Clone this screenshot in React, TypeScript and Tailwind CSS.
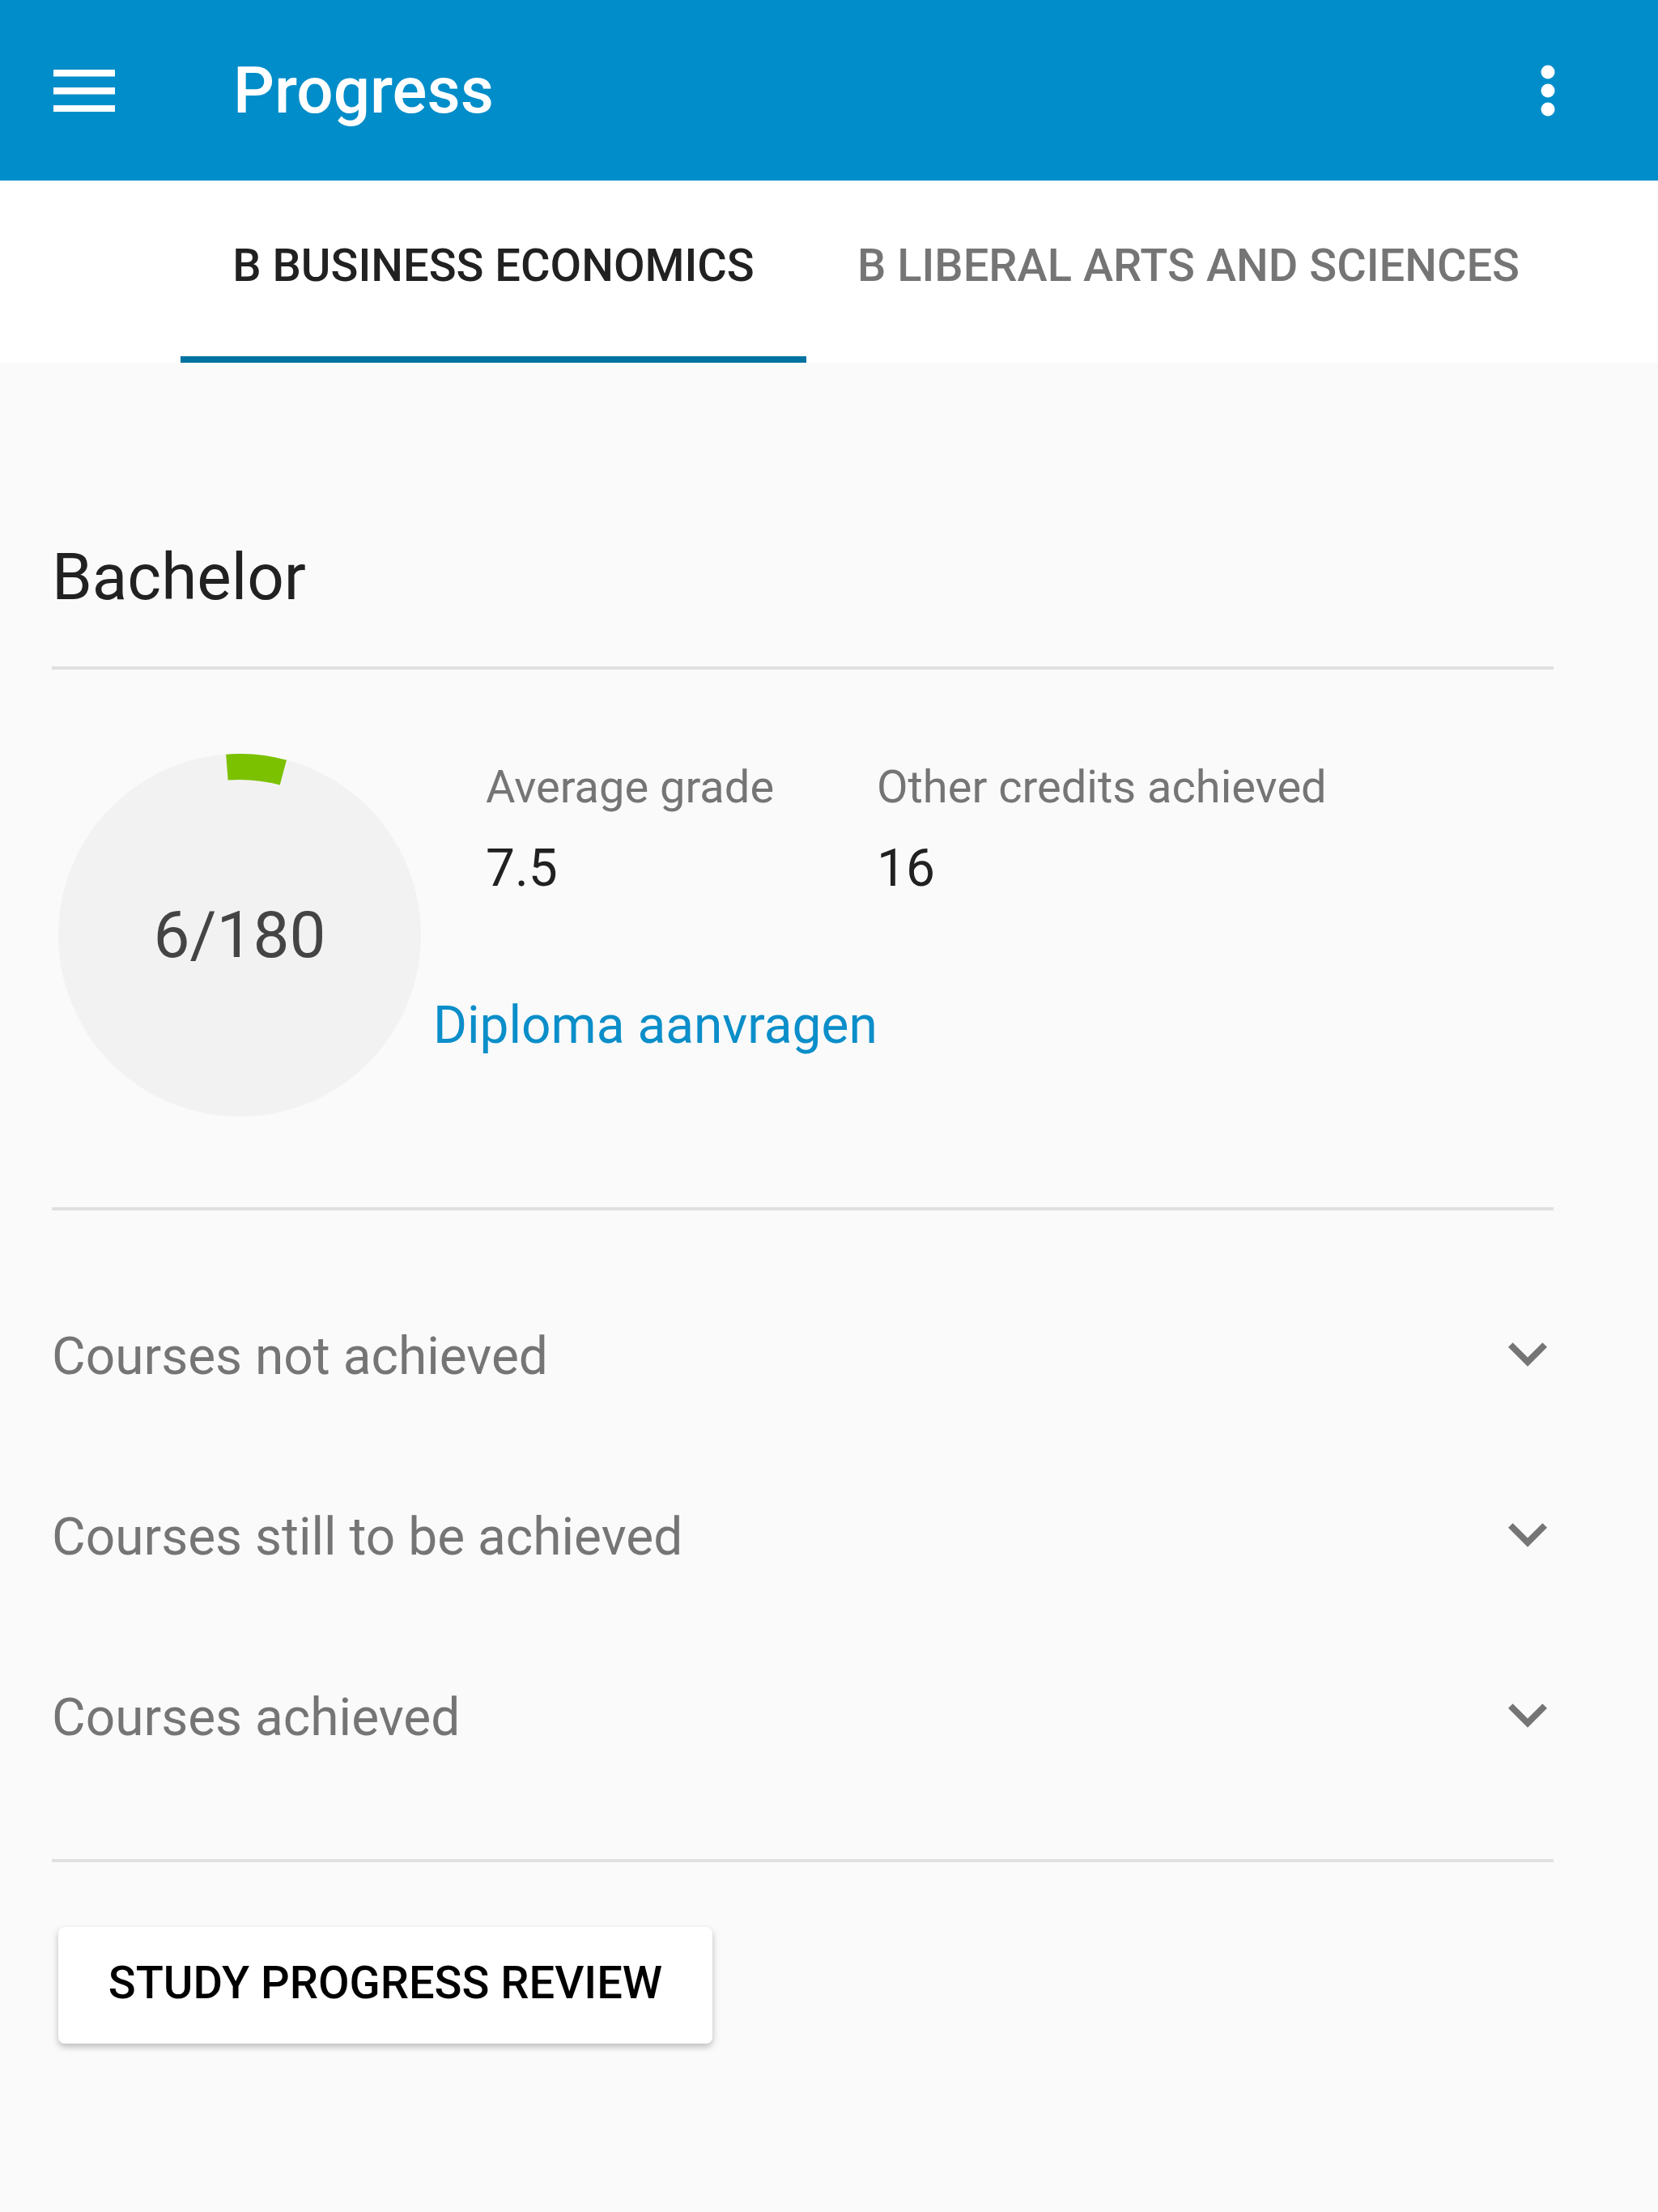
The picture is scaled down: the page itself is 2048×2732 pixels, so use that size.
const ROWS = ["Courses not achieved", "Courses still to be achieved", "Courses achieved"];

function MenuIcon() {
  return (
    <svg width="76" height="52" viewBox="0 0 76 52" className="ml-[66px] shrink-0">
      <rect x="0" y="0" width="76" height="8.5" fill="#fff" />
      <rect x="0" y="22" width="76" height="8.5" fill="#fff" />
      <rect x="0" y="44" width="76" height="8.5" fill="#fff" />
    </svg>
  );
}

function MoreIcon() {
  return (
    <svg width="18" height="64" viewBox="0 0 18 64" className="ml-auto mr-[127px] shrink-0">
      <circle cx="9" cy="9" r="8.5" fill="#fff" />
      <circle cx="9" cy="32" r="8.5" fill="#fff" />
      <circle cx="9" cy="55" r="8.5" fill="#fff" />
    </svg>
  );
}

function Chevron() {
  return (
    <svg width="48" height="30" viewBox="6 8.59 12 7.41" className="mr-[8px] shrink-0">
      <path d="M7.41 8.59L12 13.17l4.59-4.58L18 10l-6 6-6-6 1.41-1.41z" fill="#757575" />
    </svg>
  );
}

function ProgressRing() {
  return (
    <div className="relative ml-[8px] h-[448px] w-[448px] shrink-0">
      <svg width="448" height="448" viewBox="0 0 448 448" className="absolute inset-0">
        <circle cx="224" cy="224" r="224" fill="#f2f2f2" />
        <path
          d="M207.2 0.63 A224 224 0 0 1 281.97 7.63 L273.69 38.54 A192 192 0 0 0 209.6 32.54 Z"
          fill="#7bc100"
        />
      </svg>
      <div className="absolute inset-0 flex items-center justify-center">
        <span className="text-[80px] leading-[94px] text-[#444444]">6/180</span>
      </div>
    </div>
  );
}

export default function App() {
  return (
    <div className="min-h-[2732px] w-full bg-[#fafafa] font-['Roboto',sans-serif]">
      {/* Toolbar */}
      <header className="flex h-[223px] items-center bg-[#008dc9]">
        <MenuIcon />
        <h1 className="ml-[146px] text-[80px] font-medium leading-[94px] text-white">Progress</h1>
        <MoreIcon />
      </header>

      {/* Tabs */}
      <nav className="flex h-[225px] bg-white pl-[223px]">
        <div className="w-[773px] border-b-[8px] border-[#0072a0] pt-[72px] text-center text-[56px] font-medium leading-[66px] text-[#212121]">
          B BUSINESS ECONOMICS
        </div>
        <div className="w-[944px] pt-[72px] text-center text-[56px] font-medium leading-[66px] text-[#757575]">
          B LIBERAL ARTS AND SCIENCES
        </div>
      </nav>

      <main className="pl-[64px] pr-[129px] pt-[219px]">
        <h2 className="text-[80px] leading-[92px] text-[#212121]">Bachelor</h2>
        <div className="mt-[64px] h-[4px] bg-[#e0e0e0]" />

        {/* Summary */}
        <div className="mt-[104px] flex h-[448px]">
          <ProgressRing />
          <div className="flex flex-col pt-[8px]">
            <div className="ml-[80px] flex">
              <div className="w-[483px]">
                <div className="text-[56px] leading-[66px] text-[#757575]">Average grade</div>
                <div className="mt-[30px] text-[64px] leading-[75px] text-[#212121]">7.5</div>
              </div>
              <div>
                <div className="text-[56px] leading-[66px] text-[#757575]">Other credits achieved</div>
                <div className="mt-[30px] text-[64px] leading-[75px] text-[#212121]">16</div>
              </div>
            </div>
            <a className="ml-[15px] mt-[119px] text-[64px] leading-[75px] text-[#0b8ec9]">Diploma aanvragen</a>
          </div>
        </div>

        <div className="mt-[112px] h-[4px] bg-[#e0e0e0]" />

        {/* Course groups */}
        <div className="py-[66px]">
          {ROWS.map((label) => (
            <div key={label} className="flex h-[223px] items-center justify-between">
              <span className="pt-[6px] text-[64px] leading-[75px] text-[#757575]">{label}</span>
              <Chevron />
            </div>
          ))}
        </div>

        <div className="h-[4px] bg-[#e0e0e0]" />

        <button
          type="button"
          className="ml-[8px] mt-[80px] flex h-[144px] w-[808px] items-center justify-center rounded-[8px] bg-white pb-[6px] text-[56px] font-medium leading-[66px] text-black shadow-[0_4px_8px_rgba(0,0,0,0.25)]"
        >
          STUDY PROGRESS REVIEW
        </button>
      </main>
    </div>
  );
}
